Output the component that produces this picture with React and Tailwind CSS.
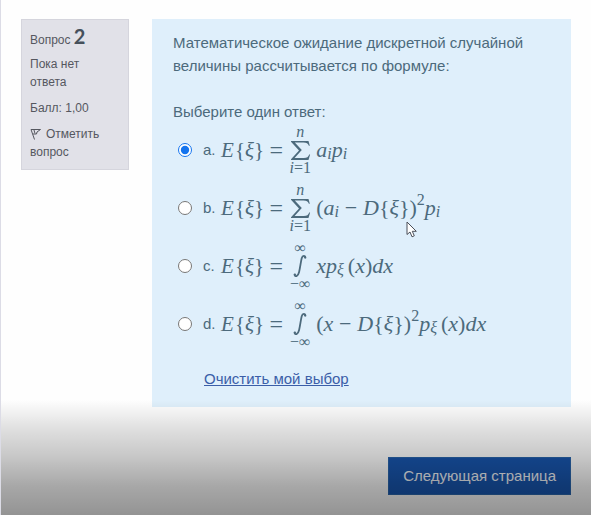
import React from "react";

function Xi() {
  return <i>ξ</i>;
}

function Sub({ children }) {
  return <sub className="static translate-y-1 text-base leading-none">{children}</sub>;
}

function Sq() {
  return <sup className="static -translate-y-2 text-base leading-none">2</sup>;
}

function Expected() {
  return (
    <span className="flex items-center text-[21px]">
      <i className="w-[14px]">E</i>
      <span>{"{"}</span>
      <Xi />
      <span>{"}"}</span>
      <span className="ml-1 w-4 text-center text-2xl leading-6">=</span>
    </span>
  );
}

function Operator({ top, bottom, children }) {
  return (
    <span className="flex w-8 flex-col items-center whitespace-nowrap">
      <span className="flex h-3 items-center text-base leading-3">{top}</span>
      <span className="flex h-6 items-center">{children}</span>
      <span className="flex h-3 items-center text-base leading-3">{bottom}</span>
    </span>
  );
}

function Sum() {
  return (
    <Operator top={<i>n</i>} bottom={<span><i>i</i>=1</span>}>
      <svg width="21" height="21" viewBox="0 0 21 21" fill="currentColor" role="img" aria-label="∑">
        <path d="M1 1h17.5l1.3 4.8h-.9C18 3.200 16.600 2.500 13.500 2.500H4.800l7 7.600L4.600 18h9.200c3.200 0 4.600-1 5.400-3.500h.9L18.500 20H1v-.8l8-8.800L1 1.700z" />
      </svg>
    </Operator>
  );
}

function Integral() {
  return (
    <Operator top="∞" bottom="−∞">
      <svg width="14" height="24" viewBox="0 0 14 24" fill="none" stroke="currentColor" strokeLinecap="round" role="img" aria-label="∫">
        <path d="M12.500 3.600C12.300 1.200 9.600 1.100 8.700 4.200C7.800 7.500 7.200 13.500 6.100 18C5 22.800 2 23.200 1.500 20.600" strokeWidth="1.800" />
        <circle cx="12" cy="3.600" r="1" fill="currentColor" stroke="none" />
        <circle cx="2" cy="20.400" r="1" fill="currentColor" stroke="none" />
      </svg>
    </Operator>
  );
}

function Deviation({ children }) {
  return (
    <span className="flex items-center">
      <span>(</span>
      {children}
      <span className="mx-1 w-4 text-center">−</span>
      <i className="w-4">D</i>
      <span>{"{"}</span>
      <Xi />
      <span>{"}"}</span>
      <span>)</span>
      <Sq />
    </span>
  );
}

function Density() {
  return (
    <span className="flex items-center">
      <i>p</i>
      <Sub><Xi /></Sub>
      <span className="ml-1">(</span>
      <i>x</i>
      <span>)</span>
      <i>dx</i>
    </span>
  );
}

const answers = [
  { id: "a", operator: <Sum />, body: <><i>a</i><Sub><i>i</i></Sub><i>p</i><Sub><i>i</i></Sub></> },
  { id: "b", operator: <Sum />, body: <><Deviation><i>a</i><Sub><i>i</i></Sub></Deviation><i>p</i><Sub><i>i</i></Sub></> },
  { id: "c", operator: <Integral />, body: <><i>x</i><Density /></> },
  { id: "d", operator: <Integral />, body: <><Deviation><i>x</i></Deviation><Density /></> },
];

export default function App() {
  return (
    <div className="relative min-h-screen border-l border-[#dcdce6] bg-[#fefefe] font-['Liberation_Sans',Arial,sans-serif]">
      <div className="flex items-start gap-[23px] pr-5 pl-5 pt-[19px]">
        <aside className="w-[108px] shrink-0 border border-[#d5d5dd] bg-[#e1e1e8] pt-1 pr-5 pb-2 pl-2 text-xs leading-[18px] text-[#55575f]">
          <h2 className="mb-[3px] leading-6">
            Вопрос <span className="font-['Lato',sans-serif] text-xl font-bold leading-6 text-[#46505b]">2</span>
          </h2>
          <p className="mb-2">Пока нет ответа</p>
          <p className="mb-2">Балл: 1,00</p>
          <button type="button" className="block text-left">
            <svg className="mr-1 inline-block align-[-2px]" width="12" height="12" viewBox="0 0 12 12" fill="none" stroke="currentColor" strokeWidth="1">
              <path d="M1 1.500L4.500 11.500M1 1.500H10.500L7 4L6.500 6H3M4 2L5 5.500" />
            </svg>
            Отметить вопрос
          </button>
        </aside>

        <main className="min-w-0 flex-1">
          <form onSubmit={(e) => e.preventDefault()}>
            <div className="bg-[#dfeffb] px-[21px] pt-3 pb-4 text-[#4c6a7c]">
              <p className="text-[15px] leading-[23px]">
                Математическое ожидание дискретной случайной величины рассчитывается по формуле:
              </p>
              <fieldset className="mt-[23px]">
                <legend className="text-[15px] leading-[23px]">Выберите один ответ:</legend>
                <div className="flex flex-col gap-2 pt-0.5">
                  {answers.map((a) => (
                    <div key={a.id} className="flex h-[50px] items-center pl-[5px]">
                      <input
                        id={`answer-${a.id}`}
                        type="radio"
                        name="answer"
                        defaultChecked={a.id === "a"}
                        className="m-0 size-[14px] shrink-0 accent-[#1474ee]"
                      />
                      <label htmlFor={`answer-${a.id}`} className="flex items-center pl-[11px] whitespace-nowrap">
                        <span className="w-[18px] text-[15px]">{a.id}.</span>
                        <span className="flex items-center font-['Liberation_Serif','Times_New_Roman',serif] text-[22px] leading-6">
                          <Expected />
                          {a.operator}
                          <span className="flex items-center">{a.body}</span>
                        </span>
                      </label>
                    </div>
                  ))}
                </div>
              </fieldset>
              <a href="#clear" className="mt-[18px] ml-[31px] inline-block text-[15px] leading-6 text-[#3b5ea8] underline">
                Очистить мой выбор
              </a>
            </div>
            <div className="flex justify-end pt-[50px] pb-5">
              <button type="submit" className="h-[38px] border border-[#2a66ad] bg-[#1856af] px-[14px] text-[15px] font-normal text-[#f2f5fa]">
                Следующая страница
              </button>
            </div>
          </form>
        </main>
      </div>

      <div className="pointer-events-none absolute inset-x-0 bottom-0 h-[115px] bg-[linear-gradient(to_bottom,rgba(0,0,0,0)_0%,rgba(0,0,0,0.13)_27%,rgba(0,0,0,0.21)_48%,rgba(0,0,0,0.34)_75%,rgba(0,0,0,0.42)_100%)]" />

      <svg className="pointer-events-none absolute top-[221px] left-[405px]" width="12" height="17" viewBox="0 0 12 17" aria-hidden="true">
        <path d="M1 1V13.500L4 11L6 15.800L8.300 14.800L6.300 10.300H10.300Z" fill="#fff" stroke="#4b4f58" strokeWidth="1" />
      </svg>
    </div>
  );
}
